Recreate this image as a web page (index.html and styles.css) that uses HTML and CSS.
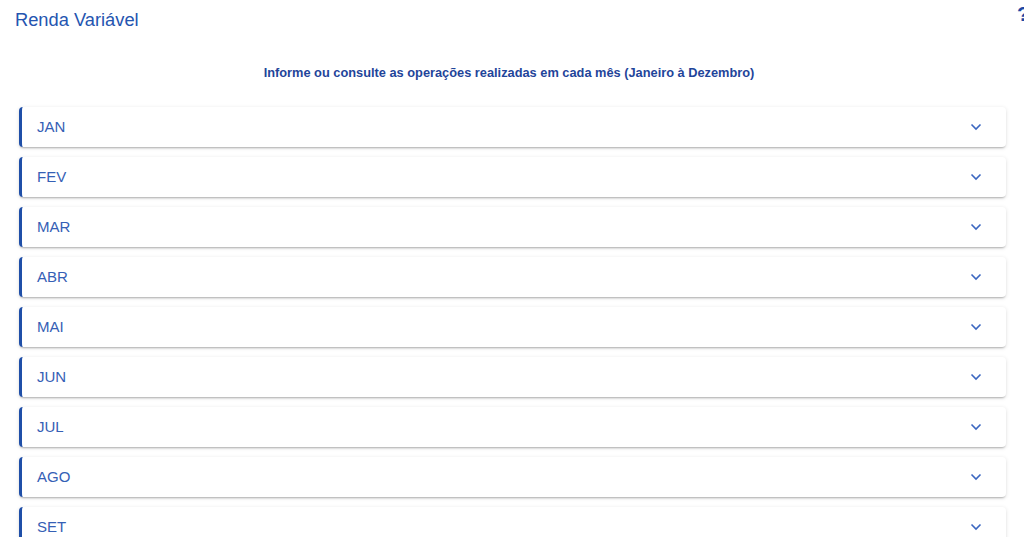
FILE: index.html
```html
<!DOCTYPE html>
<html lang="pt-BR">
<head>
    <meta charset="UTF-8">
    <meta name="viewport" content="width=device-width, initial-scale=1.0">
    <title>Renda Variável</title>
    <link rel="stylesheet" href="styles.css">
</head>
<body>
    <header class="topo">
        <h1 class="titulo">Renda Variável</h1>
        <span class="ajuda">?</span>
    </header>

    <p class="subtitulo">Informe ou consulte as operações realizadas em cada mês (Janeiro à Dezembro)</p>

    <div class="meses">
        <div class="mes"><span>JAN</span><svg class="seta" viewBox="0 0 12 8"><path d="M1.5 1.5 6 6l4.5-4.5"/></svg></div>
        <div class="mes"><span>FEV</span><svg class="seta" viewBox="0 0 12 8"><path d="M1.5 1.5 6 6l4.5-4.5"/></svg></div>
        <div class="mes"><span>MAR</span><svg class="seta" viewBox="0 0 12 8"><path d="M1.5 1.5 6 6l4.5-4.5"/></svg></div>
        <div class="mes"><span>ABR</span><svg class="seta" viewBox="0 0 12 8"><path d="M1.5 1.5 6 6l4.5-4.5"/></svg></div>
        <div class="mes"><span>MAI</span><svg class="seta" viewBox="0 0 12 8"><path d="M1.5 1.5 6 6l4.5-4.5"/></svg></div>
        <div class="mes"><span>JUN</span><svg class="seta" viewBox="0 0 12 8"><path d="M1.5 1.5 6 6l4.5-4.5"/></svg></div>
        <div class="mes"><span>JUL</span><svg class="seta" viewBox="0 0 12 8"><path d="M1.5 1.5 6 6l4.5-4.5"/></svg></div>
        <div class="mes"><span>AGO</span><svg class="seta" viewBox="0 0 12 8"><path d="M1.5 1.5 6 6l4.5-4.5"/></svg></div>
        <div class="mes"><span>SET</span><svg class="seta" viewBox="0 0 12 8"><path d="M1.5 1.5 6 6l4.5-4.5"/></svg></div>
        <div class="mes"><span>OUT</span><svg class="seta" viewBox="0 0 12 8"><path d="M1.5 1.5 6 6l4.5-4.5"/></svg></div>
        <div class="mes"><span>NOV</span><svg class="seta" viewBox="0 0 12 8"><path d="M1.5 1.5 6 6l4.5-4.5"/></svg></div>
        <div class="mes"><span>DEZ</span><svg class="seta" viewBox="0 0 12 8"><path d="M1.5 1.5 6 6l4.5-4.5"/></svg></div>
    </div>
</body>
</html>
```

FILE: styles.css
```css
html, body {
    overflow: hidden;
}

body {
    font-family: "Liberation Sans", Arial, sans-serif;
    margin: 0;
    padding: 0;
    background-color: #fff;
}

.topo {
    position: relative;
    height: 40px;
    padding: 0 15px;
}

.titulo {
    margin: 0;
    padding-top: 9px;
    font-size: 18.3px;
    font-weight: normal;
    color: #2455b0;
    line-height: 22px;
}

/* icone de ajuda cortado na borda */
.ajuda {
    position: absolute;
    top: 2px;
    left: 1017px;
    font-size: 21px;
    font-weight: bold;
    color: #1d48a5;
}

.subtitulo {
    margin: 25px 0 0;
    padding-right: 6px;
    text-align: center;
    font-size: 12.8px;
    font-weight: bold;
    color: #1f459a;
    line-height: 16px;
}

.meses {
    display: flex;
    flex-direction: column;
    gap: 10px;
    margin: 26px 18px 0 19px;
}

.mes {
    display: flex;
    align-items: center;
    justify-content: space-between;
    height: 40px;
    padding: 0 24px 0 15px;
    background-color: #fff;
    border-left: 3px solid #1f4fa8;
    border-radius: 4px;
    box-shadow: 0 2px 2px -1px rgba(0, 0, 0, 0.25), 0 1px 4px rgba(0, 0, 0, 0.12);
    font-size: 15px;
    color: #3560b5;
}

.mes span {
    padding-bottom: 2px;
}

.seta {
    width: 12px;
    height: 8px;
    fill: none;
    stroke: #3a66c0;
    stroke-width: 1.6;
}
```
